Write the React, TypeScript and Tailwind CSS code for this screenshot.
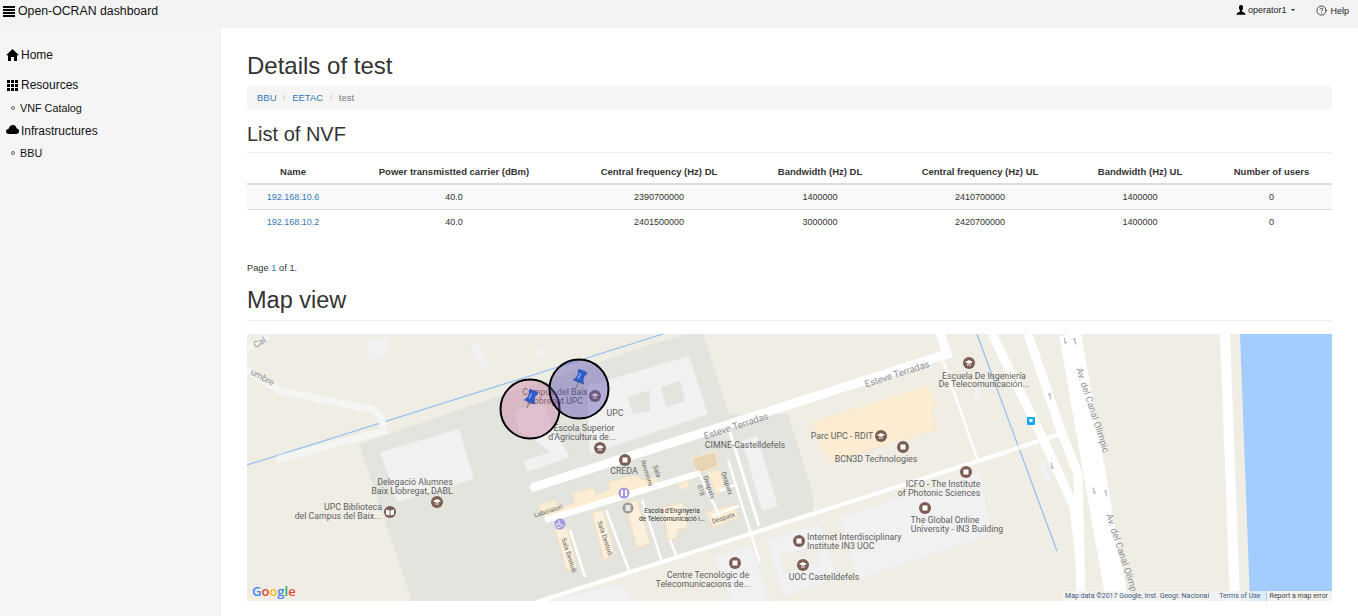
import React from 'react';
import { CircleHelp } from 'lucide-react';

const rows = [
  ['192.168.10.6', '40.0', '2390700000', '1400000', '2410700000', '1400000', '0'],
  ['192.168.10.2', '40.0', '2401500000', '3000000', '2420700000', '1400000', '0'],
];

const headers = [
  ['Name', 'w-[92px]'],
  ['Power transmistted carrier (dBm)', 'w-[230px]'],
  ['Central frequency (Hz) DL', 'w-[180px]'],
  ['Bandwidth (Hz) DL', 'w-[142px]'],
  ['Central frequency (Hz) UL', 'w-[178px]'],
  ['Bandwidth (Hz) UL', 'w-[142px]'],
  ['Number of users', 'w-[121px]'],
];

const blocks = [
  '118,8 140,2 144,15 138,17 140,22 123,27',
  '222,12 233,8 243,35 235,37',
  '288,17 297,13 299,22 291,24',
  '133,118 212,95 227,145 150,168',
  '267,77 295,68 310,100 323,123 280,138 277,127 303,118 290,108 272,97',
  '340,52 442,22 461,80 343,120',
  '495,107 510,102 531,172 515,177',
  '593,183 733,137 745,200 610,245',
  '520,207 573,189 590,243 536,263',
  '466,222 505,212 523,267 485,267',
  '791,128 798,127 805,147 798,149',
  '726,53 731,52 734,68 729,68',
  '290,267 377,250 385,267',
];

const courtyards = [
  '414,53 433,47 438,67 419,73',
  '380,63 403,56 403,77 386,80',
];

// complex coordinates come from local = 273 + x/3, 106 + y/3
const oranges = [
  '566,88 681,52 689,73 684,76 690,95 583,128 580,120 575,117',
  '290,171 308,166 311,174 328,169 326,159 346,154 349,161 363,156 361,148 375,144 390,141 395,146 411,143 410,150 300,186',
  '431,150 440,147 443,153 433,156',
  '460,138 473,136 477,156 470,161 465,150',
  '460,178 488,171 491,184 466,193',
];

const wings = [
  '308,196 320,193 330,233 320,237',
  '345,179 356,176 368,221 357,226',
  '378,169 390,166 403,209 390,214',
  '416,173 436,169 441,194 430,196 430,204 421,206',
];

const whiteLines = [
  [[323, 196], [338, 243]],
  [[359, 176], [383, 239]],
  [[395, 166], [415, 228]],
  [[423, 206], [430, 223]],
  [[453, 141], [473, 183]],
  [[481, 126], [513, 229]],
  [[473, 157], [490, 150]],
  [[465, 182], [492, 172]],
];

const labels: [string, number, number, ('start' | 'middle' | 'end')?][] = [
  ['Campus del Baix', 308, 61],
  ['Llobregat UPC', 308, 70],
  ['UPC', 368, 82],
  ['Escola Superior', 337, 97],
  ["d'Agricultura de...", 335, 106],
  ['CREDA', 377, 140],
  ['Delegació Alumnes', 168, 151],
  ['Baix Llobregat, DABL', 165, 160],
  ['UPC Biblioteca', 135, 176, 'end'],
  ['del Campus del Baix...', 134, 185, 'end'],
  ['CIMNE-Castelldefels', 498, 114],
  ['Parc UPC - RDIT', 595, 105],
  ['BCN3D Technologies', 629, 128],
  ['ICFO - The Institute', 696, 153],
  ['of Photonic Sciences', 692, 162],
  ['The Global Online', 698, 189],
  ['University - IN3 Building', 710, 198],
  ['Internet Interdisciplinary', 560, 206, 'start'],
  ['Institute IN3 UOC', 560, 215, 'start'],
  ['UOC Castelldefels', 577, 246],
  ['Centre Tecnològic de', 461, 244],
  ['Telecomunicacions de...', 456, 253],
  ['Escuela De Ingeniería', 737, 45],
  ['De Telecomunicación...', 737, 53],
];

const roadLabels: [string, number, number, number, number, ('start' | 'middle')?][] = [
  ['Cal', 14, 11, -30, 9],
  ['umbre', 14, 46, 28, 9],
  ['Esteve Terradas', 490, 95, -18, 9.500],
  ['Esteve Terradas', 651, 43, -18, 9.500],
  ['Av. del Canal Olimpic', 829, 35, 72, 9.500, 'start'],
  ['Av. del Canal Olimpic', 859, 181, 72, 9.500, 'start'],
  ['Laboratori', 302, 179, -18, 6.500],
  ['Sala Destudi', 320, 222, 72, 6.500],
  ['Sala Destudi', 356, 205, 72, 6.500],
  ['Sala', 408, 138, 72, 6.500],
  ['Reunions', 398, 140, 72, 6.500],
  ['Despatx', 460, 154, 72, 6.500],
  ['018', 452, 157, 72, 6.500],
  ['Despatx', 478, 150, 72, 6.500],
  ['Despatx', 477, 186, -18, 6.500],
];

function Cap({ x, y }: { x: number; y: number }) {
  return (
    <g>
      <circle cx={x} cy={y} r={6} fill="#7b5d54" />
      <path d={`M${x - 4} ${y - 1}l4-2 4 2-4 2z M${x - 2} ${y + 1}v1.500h4v-1.500l-2 1z`} fill="#fff" />
    </g>
  );
}

function Square({ x, y }: { x: number; y: number }) {
  return (
    <g>
      <circle cx={x} cy={y} r={6} fill="#7b5d54" />
      <rect x={x - 2.5} y={y - 2.5} width={5} height={5} fill="#fff" />
    </g>
  );
}

function Arrow({ x, y, up, r = -15 }: { x: number; y: number; up?: boolean; r?: number }) {
  return (
    <path
      d={up ? 'M0 -3.500L-1.500 -1H-.5V3.500H.5V-1H1.500z' : 'M0 3.500L-1.500 1H-.5V-3.500H.5V1H1.500z'}
      fill="#a9adb3"
      transform={`translate(${x} ${y}) rotate(${r})`}
    />
  );
}

function Pin({ x, y }: { x: number; y: number }) {
  // tip of the needle sits at x,y
  return (
    <g transform={`translate(${x} ${y}) rotate(22)`}>
      <path d="M0 0V-7" stroke="#808080" strokeWidth="1.200" />
      <path d="M-5.500 -6.500H5.500L3.500 -10L3 -15.500H4.200V-18.500H-4.200V-15.500H-3L-3.500 -10z" fill="#2d5bd0" stroke="#1e429e" strokeWidth=".5" />
      <path d="M-2.500 -9.500L-2 -15.500H-.5L-.8 -9.500z" fill="#7ea3f2" />
    </g>
  );
}

function MapView() {
  return (
    <div className="relative h-[267px] w-full overflow-hidden bg-[#f0ede5]">
      <svg viewBox="0 0 1085 267" className="block h-full w-full" style={{ fontFamily: 'Roboto, sans-serif' }}>
        {/* campus ground */}
        <polygon points="112,110 400,12 440,0 456,0 482,80 541,80 566,160 566,177 393,235 287,267 165,267" fill="#e2e4dd" />

        {blocks.map((p, i) => (
          <polygon key={i} points={p} fill="#f1f1f1" stroke="#e8e8e8" strokeWidth=".5" />
        ))}
        {courtyards.map((p, i) => (
          <polygon key={i} points={p} fill="#e2e4dd" />
        ))}
        <polygon points="533,222 568,213 573,227 537,238" fill="#f0ede5" stroke="#e2e2dc" strokeWidth=".5" />

        {/* water and canals */}
        <polygon points="993,0 1003,267 1085,267 1085,0" fill="#a3ccff" />
        <path d="M0 131L400 5L425 -3" stroke="#8ec0f5" strokeWidth="1.200" fill="none" />
        <path d="M730 0L753 63L810 217" stroke="#8ec0f5" strokeWidth="1.200" fill="none" />

        {/* roads */}
        <path d="M-5 33L33 57L123 75Q135 78 137 97L32 125" stroke="#f5f5f3" strokeWidth="7" fill="none" strokeLinecap="round" />
        <path d="M0 14L22 2" stroke="#f5f5f3" strokeWidth="6" fill="none" />
        <path d="M287 153L700 20L693 -2" stroke="#fff" strokeWidth="9" fill="none" strokeLinecap="round" />
        <path d="M290 268L393 235L753 120L813 100" stroke="#fff" strokeWidth="4" fill="none" />
        <path d="M481 92L512 192" stroke="#fff" strokeWidth="3" fill="none" />
        <path d="M696 27L731 127" stroke="#fff" strokeWidth="2.500" fill="none" />
        <path d="M745 0L797 107L827 173L833 225" stroke="#fff" strokeWidth="9" fill="none" />
        <path d="M781 0L815 100L831 140L834 267" stroke="#fff" strokeWidth="9" fill="none" />
        <path d="M823 0L870 267" stroke="#fff" strokeWidth="22" fill="none" />
        <path d="M978 0L988 267" stroke="#fff" strokeWidth="10" fill="none" />

        {/* faculty buildings */}
        {oranges.map((p, i) => (
          <polygon key={i} points={p} fill="#fcecd2" stroke="#f6e2c0" strokeWidth=".6" />
        ))}
        {wings.map((p, i) => (
          <polygon key={i} points={p} fill="#fbf0dd" stroke="#f8dfb8" strokeWidth="1" />
        ))}
        <polygon points="445,124 468,118 472,132 449,140" fill="#e9d5b6" stroke="#fcecd2" strokeWidth="1" />
        {whiteLines.map((l, i) => (
          <path key={i} d={`M${l[0][0]} ${l[0][1]}L${l[1][0]} ${l[1][1]}`} stroke="#fff" strokeWidth="2.500" fill="none" />
        ))}
        <path d="M298 186L453 139" stroke="#fff" strokeWidth="6.500" fill="none" />

        <Arrow x={818} y={7} />
        <Arrow x={828} y={7} up />
        <Arrow x={803} y={62} up />
        <Arrow x={805} y={132} />
        <Arrow x={847} y={157} />
        <Arrow x={859} y={159} up />

        {roadLabels.map(([t, x, y, r, s, a], i) => (
          <text
            key={i}
            x={x}
            y={y}
            fontSize={s}
            textAnchor={a ?? 'middle'}
            fill={s > 8 ? '#8f9296' : '#666'}
            transform={`rotate(${r} ${x} ${y})`}
          >
            {t}
          </text>
        ))}
        {labels.map(([t, x, y, a], i) => (
          <text key={i} x={x} y={y} fontSize={8.800} textAnchor={a ?? 'middle'} fill="#5f5f5f">
            {t}
          </text>
        ))}
        <text x={425} y={179} fontSize={6.500} textAnchor="middle" fill="#333">Escola d'Enginyeria</text>
        <text x={425} y={187} fontSize={6.500} textAnchor="middle" fill="#333">de Telecomunicació i...</text>

        <Cap x={348} y={62} />
        <Cap x={353} y={114} />
        <Cap x={190} y={168} />
        <Cap x={634} y={102} />
        <Cap x={556} y={231} />
        <Cap x={722} y={29} />
        <circle cx={143} cy={178} r={6} fill="#7b5d54" />
        <path d="M139 175.500l3.500 1v5l-3.500-1z M147 175.500l-3.500 1v5l3.500-1z" fill="#fff" />
        <Square x={378} y={126} />
        <Square x={656} y={113} />
        <Square x={719} y={138} />
        <Square x={678} y={174} />
        <Square x={552} y={207} />
        <Square x={488} y={229} />

        {/* accessibility, toilets, info */}
        <circle cx={313} cy={190} r={5.500} fill="#a598e0" />
        <path d="M312 186.500v4h3l1.500 2.500M310.500 189a2.500 2.500 0 1 0 3.500 3.500" stroke="#fff" fill="none" />
        <circle cx={377} cy={159} r={5.500} fill="#a598e0" />
        <path d="M374 156h2v6h-2z M378 156h2v6h-2z" fill="#fff" />
        <circle cx={381} cy={174} r={5.500} fill="#9a9a9a" />
        <rect x={378.500} y={171} width={5} height={6} fill="#e8e8e8" />

        <rect x={780} y={83} width={8} height={8} rx={1} fill="#16aaff" />
        <rect x={782.500} y={85} width={3} height={3} fill="#fff" />

        {/* coverage circles */}
        <circle cx={283} cy={75} r={29.500} fill="#c4709a" fillOpacity=".38" stroke="#000" strokeWidth="2" />
        <circle cx={332} cy={55} r={29.500} fill="#5a4cb0" fillOpacity=".42" stroke="#000" strokeWidth="2" />
        <Pin x={280} y={74} />
        <Pin x={329} y={54} />

        <text x={5} y={262} fontSize={13} fontWeight={600} style={{ fontFamily: '"Open Sans", sans-serif' }}>
          <tspan fill="#4285f4">G</tspan>
          <tspan fill="#ea4335">o</tspan>
          <tspan fill="#fbbc05">o</tspan>
          <tspan fill="#4285f4">g</tspan>
          <tspan fill="#34a853">l</tspan>
          <tspan fill="#ea4335">e</tspan>
        </text>
      </svg>
      <div className="absolute bottom-0 right-0 flex h-[10px] items-center text-[7px] leading-[10px] font-['Roboto',sans-serif] text-[#444]">
        <span className="bg-[#f3f3f0]/80 pl-[3px] pr-[4px] text-[#3d5a80]">Map data ©2017 Google, Inst. Geogr. Nacional</span>
        <span className="ml-[1px] bg-[#eef3f8]/80 px-[5px] text-[#3d5a80]">Terms of Use</span>
        <span className="ml-[1px] bg-[#f1f1ee] pl-[3px] pr-[4px]">Report a map error</span>
      </div>
    </div>
  );
}

function SideItem({ icon, label }: { icon: React.ReactNode; label: string }) {
  return (
    <div className="flex items-center pl-[6px] text-[12px] leading-[14px] text-[#111]">
      <span className="mr-[2px] flex w-[13px] justify-center">{icon}</span>
      {label}
    </div>
  );
}

function SubItem({ label }: { label: string }) {
  return (
    <div className="flex items-center pl-[11px] text-[10.800px] leading-[12px] text-[#111]">
      <span className="mr-[5px] h-[4px] w-[4px] rounded-full border border-[#666]" />
      {label}
    </div>
  );
}

export default function App() {
  return (
    <div className="flex h-[616px] w-[1358px] flex-col overflow-hidden bg-white font-['Liberation_Sans',Arial,sans-serif] text-[#333]">
      <nav className="flex h-[28px] shrink-0 items-start justify-between bg-[#f3f3f3]">
        <div className="flex items-center pl-[3px] pt-[3px] text-[12.300px] leading-[15px] text-[#111]">
          <svg width="12" height="11" viewBox="0 0 12 11" className="mr-[3px]">
            <path d="M0 0h12v2H0zM0 3h12v2H0zM0 6h12v2H0zM0 9h12v2H0z" fill="#000" />
          </svg>
          <span className="pt-[1px]">Open-OCRAN dashboard</span>
        </div>
        <div className="flex items-center pr-[9px] pt-[2px] text-[9px] leading-[14px] text-[#222]">
          <svg width="10" height="10" viewBox="0 0 10 10" className="mr-[2px]">
            <path d="M5 0C3.500 0 2.800 1.200 3 3c.1 1 .6 2 1 2.500v1C3 7 .8 7.500.3 9.800h9.400C9.200 7.500 7 7 6 6.500v-1C6.400 5 6.900 4 7 3c.2-1.800-.5-3-2-3z" fill="#000" />
          </svg>
          operator1
          <span className="ml-[5px] mr-[21px] h-0 w-0 border-x-[2px] border-t-[2px] border-x-transparent border-t-[#222]" />
          <CircleHelp size={11} strokeWidth={1.500} className="mr-[3px] text-black" />
          <span className="pt-[2px]">Help</span>
        </div>
      </nav>
      <div className="flex min-h-0 flex-1">
        <aside className="w-[221px] shrink-0 border-r border-[#eeeeee] bg-[#f5f5f5] pt-[20px]">
          <SideItem
            label="Home"
            icon={
              <svg width="13" height="12" viewBox="0 0 13 12">
                <path d="M6.500 0L13 6.300h-2V12H8V8H5v4H2V6.300H0z" fill="#000" />
              </svg>
            }
          />
          <div className="mt-[16px]">
            <SideItem
              label="Resources"
              icon={
                <svg width="11" height="11" viewBox="0 0 11 11">
                  <path d="M0 0h3v3H0zM4 0h3v3H4zM8 0h3v3H8zM0 4h3v3H0zM4 4h3v3H4zM8 4h3v3H8zM0 8h3v3H0zM4 8h3v3H4zM8 8h3v3H8z" fill="#000" />
                </svg>
              }
            />
          </div>
          <div className="mt-[10px]">
            <SubItem label="VNF Catalog" />
          </div>
          <div className="mt-[10px]">
            <SideItem
              label="Infrastructures"
              icon={
                <svg width="13" height="9" viewBox="0 0 13 9" className="mb-[3px]">
                  <path d="M3 9C1 9 0 8 0 6.500 0 5 1 4 2.500 4 3 2 4.500 0 7 0c2 0 3.300 1.400 3.500 3.200C12 3.500 13 4.800 13 6.200 13 8 11.800 9 10 9z" fill="#000" />
                </svg>
              }
            />
          </div>
          <div className="mt-[9px]">
            <SubItem label="BBU" />
          </div>
        </aside>
        <main className="min-w-0 flex-1 pl-[26px] pr-[26px]">
          <h1 className="mt-[24px] text-[24px] leading-[28px] font-normal">Details of test</h1>
          <div className="mt-[6px] flex h-[24px] items-center rounded bg-[#f5f5f5] px-[10px] text-[9.500px]">
            <a className="text-[#337ab7]">BBU</a>
            <span className="px-[6.500px] text-[#ccc]">/</span>
            <a className="text-[#337ab7]">EETAC</a>
            <span className="px-[6.500px] text-[#ccc]">/</span>
            <span className="text-[#777]">test</span>
          </div>
          <h2 className="mt-[12px] border-b border-[#eeeeee] pb-[5px] text-[20px] leading-[25px] font-normal">List of NVF</h2>
          <table className="w-[1085px] table-fixed border-collapse text-center text-[9px] text-[#333]">
            <thead>
              <tr className="h-[31px] border-b-2 border-[#ddd]">
                {headers.map(([h, w]) => (
                  <th key={h} className={`${w} pt-[8px] text-[9.500px] font-bold`}>
                    {h}
                  </th>
                ))}
              </tr>
            </thead>
            <tbody>
              {rows.map((r, i) => (
                <tr key={i} className={`h-[25px] border-b border-[#ddd] last:border-b-0 ${i === 0 ? 'bg-[#f9f9f9]' : ''}`}>
                  {r.map((c, j) => (
                    <td key={j} className={`pt-[2px] ${j === 0 ? 'text-[#337ab7]' : ''}`}>
                      {c}
                    </td>
                  ))}
                </tr>
              ))}
            </tbody>
          </table>
          <p className="mt-[27px] text-[9.300px] leading-[14px]">
            Page <span className="text-[#337ab7]">1</span> of 1.
          </p>
          <h2 className="mt-[11px] border-b border-[#eeeeee] pb-[6px] text-[23.500px] leading-[28px] font-normal">Map view</h2>
          <div className="mt-[13px]">
            <MapView />
          </div>
        </main>
      </div>
    </div>
  );
}
